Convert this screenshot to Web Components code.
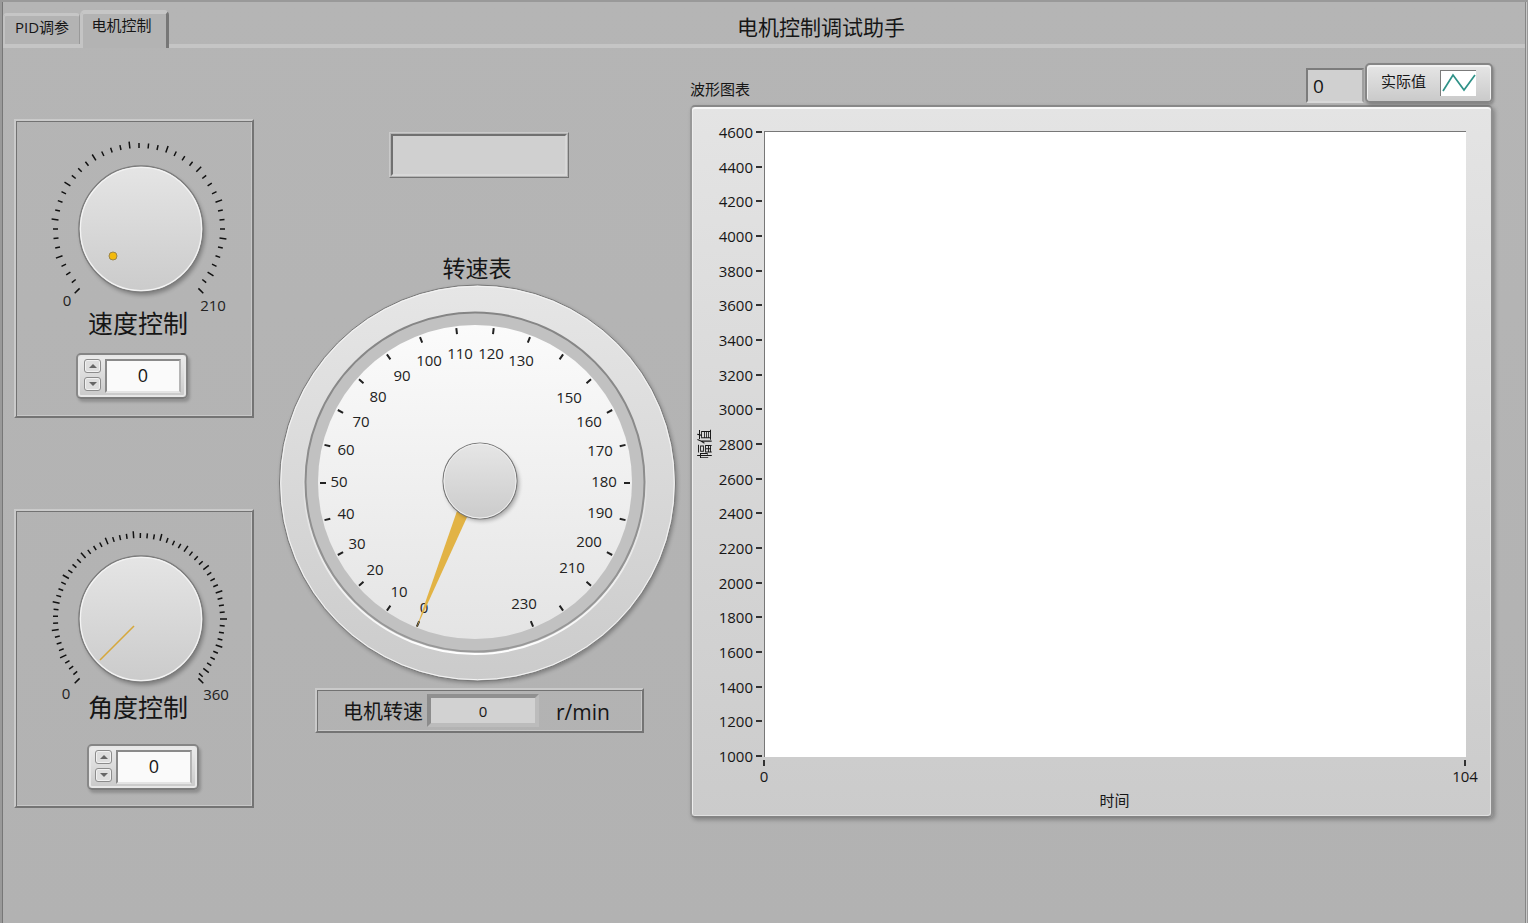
<!DOCTYPE html>
<html lang="zh-CN">
<head>
<meta charset="utf-8">
<title>电机控制调试助手</title>
<style>
  html, body { margin: 0; }
  body {
    background: #b3b3b3; color: #161616;
    font: 15px/20px "Open Sans", "Noto Sans CJK SC", sans-serif;
  }
</style>
</head>
<body>
<motor-app></motor-app>
<script>
const define = (name, css, html, setup) => {
  customElements.define(name, class extends HTMLElement {
    connectedCallback() {
      if (this.shadowRoot) return;
      const root = this.attachShadow({ mode: 'open' });
      root.innerHTML = `<style>*{box-sizing:border-box}button,input{font:inherit;color:inherit;margin:0}${css}</style>` +
        (typeof html === 'function' ? html(this) : html);
      if (setup) setup(this, root);
    }
  });
};
const polar = (cx, cy, r, deg) => {
  const a = deg * Math.PI / 180;
  return [(cx + r * Math.sin(a)).toFixed(1), (cy - r * Math.cos(a)).toFixed(1)];
};
const tick = (cx, cy, r1, r2, deg) =>
  `M${polar(cx, cy, r1, deg).join(' ')}L${polar(cx, cy, r2, deg).join(' ')}`;

/* Engraved frame shared by the decoration boxes */
const groove = `border:2px solid;border-color:#cacaca #747474 #747474 #cacaca;
  box-shadow:inset 1px 1px #727272,inset -1px -1px #c8c8c8;`;

define('tab-bar', `
  :host{display:flex;align-items:flex-end;height:46px;margin-right:3px;border-bottom:4px solid #c5c5c5}
  button{border:0;background:#b3b3b3;white-space:nowrap;flex:none}
  .idle{width:77px;height:31px;padding:0 0 6px;border-top:3px solid #c6c6c6;border-left:2px solid #c2c2c2;
    border-right:1px solid #999;border-radius:4px 4px 0 0}
  .on{width:89px;height:38px;margin-bottom:-4px;padding:0 6px 12px 0;border-top:4px solid #c6c6c6;
    border-left:3px solid #c4c4c4;border-right:3px solid #777;border-radius:5px 5px 0 0}
  ::slotted(h1){flex:1;margin:0 52px 0 0;font-size:21px;font-weight:400;line-height:34px;text-align:center}
`, `<button class="idle" type="button" role="tab">PID调参</button>
    <button class="on" type="button" role="tab" aria-selected="true">电机控制</button><slot></slot>`);

define('spin-box', `
  :host{display:flex;width:112px;height:46px;padding:4px 5px 5px 6px;gap:4px;border:2px solid;
    border-color:#858585 #808080 #7c7c7c #888;border-radius:5px;
    background:linear-gradient(#ececec,#c9c9c9);
    box-shadow:inset 0 0 0 2px #e7e7e7,2px 3px 3px #0003}
  .arrows{display:flex;flex-direction:column;justify-content:space-between;width:17px;padding-bottom:1px}
  button{display:grid;place-items:center;height:14px;padding:0;border:1px solid #8c8c8c;border-radius:3px;
    background:#dedede;box-shadow:inset 0 0 0 1px #f1f1f1}
  svg{display:block}
  input{flex:1;min-width:0;height:34px;padding:0 0 2px;text-align:center;font-size:18px;
    border:2px solid;border-color:#8a8a8a #b5b5b5 #e4e4e4 #8a8a8a;background:#fafafa;outline:0}
`, el => `<div class="arrows">
    <button type="button" aria-label="增加"><svg width="8" height="4"><path d="M0 4L4 0L8 4Z" fill="#666"/></svg></button>
    <button type="button" aria-label="减少"><svg width="8" height="4"><path d="M0 0L4 4L8 0Z" fill="#666"/></svg></button>
  </div><input value="0" inputmode="numeric" aria-label="${el.getAttribute('label')}">`,
(el, root) => {
  const input = root.querySelector('input');
  root.querySelectorAll('button').forEach((b, i) =>
    b.addEventListener('click', () => { input.value = Number(input.value) + (i ? -1 : 1); }));
});

define('knob-panel', `
  :host{display:block;height:299px;${groove}}
  svg{display:block;overflow:visible}
  text{font-size:15px;fill:#222;text-anchor:middle}
  h2{margin:-2px 0 0;padding-left:8px;font-size:25px;font-weight:400;line-height:28px;text-align:center}
  ::slotted(spin-box){margin-top:16px}
  :host([pointer=line]) svg{height:184px}
  :host([pointer=line]) ::slotted(spin-box){margin-top:23px}
`, el => {
  const max = +el.getAttribute('max'), step = +el.getAttribute('step');
  const values = [];
  for (let v = 0; v <= max; v += step) values.push(v);
  if (values[values.length - 1] < max) values.push(max);
  const d = values.map((v, i) => {
    const end = v === 0 || v === max;
    return tick(123, 108, end ? 84 : 81, end ? 91 : i % 4 ? 86 : 88, -135 + v / max * 270);
  }).join('');
  const line = el.getAttribute('pointer') === 'line';
  return `<svg width="236" height="190">
    <defs>
      <linearGradient id="face" x2="0" y2="1"><stop stop-color="#e5e5e5"/><stop offset="1" stop-color="#cbcbcb"/></linearGradient>
      <filter id="soft" x="-20%" y="-20%" width="140%" height="140%"><feGaussianBlur stdDeviation="2"/></filter>
    </defs>
    <path d="${d}" stroke="#111" stroke-width="1.5"/>
    <ellipse cx="127" cy="111" rx="62" ry="63" fill="#000" opacity=".3" filter="url(#soft)"/>
    <ellipse cx="125" cy="108" rx="62" ry="63" fill="url(#face)" stroke="#7d7d7d" stroke-width="1.5"/>
    <ellipse cx="125" cy="108" rx="60.6" ry="61.6" fill="none" stroke="#f3f3f3" stroke-width="1.3"/>
    ${line ? '<path d="M118 115L84 149" stroke="#d6a83c" stroke-width="1.6"/>'
           : '<circle cx="97" cy="135" r="4" fill="#f3ba0c" stroke="#9c8548"/>'}
    <text x="${line ? 50 : 51}" y="${line ? 188 : 185}">0</text><text x="${line ? 200 : 197}" y="${line ? 189 : 190}">${max}</text>
  </svg><h2>${el.getAttribute('label')}</h2><slot></slot>`;
});

define('speed-gauge', `
  :host{display:block}
  h2{margin:0;font-size:23px;font-weight:400;line-height:28px;padding-bottom:2px;text-align:center}
  svg{display:block;overflow:visible}
  text{font-size:15px;fill:#222;text-anchor:middle}
`, () => {
  const cx = 197, cy = 198, angle = v => (v - 115) * 180 / 130;
  let ticks = '', labels = '';
  for (let v = 0; v <= 230; v += 10) {
    const a = v === 0 ? -158 : v === 230 ? 158 : angle(v);
    ticks += tick(cx, v > 50 && v < 180 ? cy : cy + 1, 149, 155, a);
    if (v === 140 || v === 220) continue;
    const r = v === 0 ? 136 : v === 50 ? 136 : v < 70 ? 133 : v === 230 ? 132 : v === 150 ? 126 : 129;
    const [x, y] = polar(cx, cy, r, a);
    labels += `<text x="${Math.round(x)}" y="${Math.round(y) + 5}">${v}</text>`;
  }
  return `<h2>转速表</h2><svg width="398" height="398">
    <defs>
      <linearGradient id="rim" x2="0" y2="1"><stop stop-color="#e6e6e6"/><stop offset="1" stop-color="#cbcbcb"/></linearGradient>
      <linearGradient id="dial" x2="0" y2="1"><stop stop-color="#fbfbfb"/><stop offset="1" stop-color="#e4e4e4"/></linearGradient>
      <linearGradient id="edge" x2="0" y2="1"><stop stop-color="#858585"/><stop offset=".5" stop-color="#8d8d8d"/><stop offset="1" stop-color="#999"/></linearGradient>
      <linearGradient id="glow" x2="0" y2="1"><stop offset=".4" stop-color="#fff" stop-opacity="0"/><stop offset="1" stop-color="#fff"/></linearGradient>
      <filter id="soft" x="-20%" y="-20%" width="140%" height="140%"><feGaussianBlur stdDeviation="2"/></filter>
    </defs>
    <circle cx="201" cy="201" r="198" opacity=".3" filter="url(#soft)"/>
    <circle cx="199.500" cy="199" r="198" fill="url(#rim)" stroke="#787878"/>
    <circle cx="199.500" cy="199" r="196.700" fill="none" stroke="#f4f4f4"/>
    <circle cx="197" cy="199" r="171" fill="none" stroke="url(#glow)" stroke-width="2"/>
    <circle cx="197" cy="198" r="169.500" fill="#c1c1c1" stroke="url(#edge)" stroke-width="2"/>
    <circle cx="197" cy="198" r="157" fill="url(#dial)"/>
    <path d="${ticks}" stroke="#222" stroke-width="2"/>${labels}
    <path d="M179 227L190 231L138 345Z" fill="#e2b345"/>
    <circle cx="204" cy="200" r="37" opacity=".3" filter="url(#soft)"/>
    <ellipse cx="202" cy="197" rx="37" ry="38" fill="url(#rim)" stroke="#7a7a7a" stroke-width="1.200"/>
    <ellipse cx="202" cy="197" rx="36" ry="37" fill="none" stroke="#f0f0f0"/>
  </svg>`;
});

define('speed-readout', `
  :host{display:flex;align-items:center;width:329px;height:45px;padding-left:26px;${groove}}
  label{font-size:20px;line-height:28px;padding-top:2px}
  input{width:112px;height:33px;margin-left:4px;padding:0;text-align:center;border:4px solid;
    border-color:#909090 #bcbcbc #bcbcbc #8c8c8c;background:#d2d2d2;outline:0}
  span{margin-left:17px;font-size:21px;line-height:28px;padding-top:2px}
`, `<label for="rpm">电机转速</label><input id="rpm" value="0" readonly><span>r/min</span>`);

define('status-box', `
  :host{display:block;width:180px;height:46px;padding:1px;border:1px solid;border-color:#cacaca #747474 #747474 #cacaca}
  input{display:block;width:100%;height:100%;border:2px solid;border-color:#707070 #d8d8d8 #d8d8d8 #707070;
    background:#d0d0d0;outline:0}
`, `<input readonly aria-label="状态">`);

define('wave-chart', `
  :host{display:block}
  .bar{display:flex;align-items:flex-end;height:42px}
  h2{flex:1;margin:0 0 6px;font-size:15px;font-weight:400;line-height:20px}
  .bar input{width:58px;height:35px;margin:0 1px 2px 0;padding:0 0 0 5px;font-size:19px;border:2px solid;
    border-color:#7c7c7c #a0a0a0 #d8d8d8 #7c7c7c;background:#d0d0d0;outline:0}
  .legend{display:flex;align-items:center;gap:14px;width:128px;height:40px;
    padding:0 0 4px 14px;margin-bottom:2px;border:2px solid #868686;border-radius:5px;
    background:linear-gradient(#e6e6e6,#cacaca);box-shadow:inset 0 1px 0 1px #f2f2f2,1px 2px 3px #0004}
  .legend svg{flex:none;margin-top:4px;background:#fff;border:solid #7b7b7b;border-width:1px 0 0 1px}
  .panel{display:grid;grid-template-columns:24px 48px 1fr;grid-template-rows:626px 61px;height:713px;
    padding:24px 25px 0 0;border:2px solid;border-color:#888 #8e8e8e #848484 #999;border-radius:5px;
    background:linear-gradient(#e4e4e4,#cbcbcb);
    box-shadow:inset 0 2px #f8f8f8,inset 1px 0 #eee,inset -1px -1px #e0e0e0,2px 2px 4px #0004}
  .yname{align-self:center;justify-self:center;writing-mode:vertical-rl;text-orientation:sideways;
    transform:rotate(180deg);line-height:20px}
  .scale{display:flex;flex-direction:column;justify-content:space-between;margin:-9px 0 -9px}
  .scale span{display:flex;align-items:center;justify-content:flex-end;gap:3px;height:20px;padding-right:2px}
  .scale span::after{content:"";width:6px;height:2px;background:#333}
  .plot{background:#fff;border:solid #777;border-width:1px 0 0 1px}
  .time{grid-column:3;display:flex;justify-content:space-between;margin:3px -13px 0 -14px;height:20px}
  .time span{width:28px;line-height:20px;text-align:center}
  .time span::before{content:"";display:block;width:2px;height:6px;margin:0 auto;background:#333}
  .time .xname{width:60px;margin-top:30px}
  .time .xname::before{display:none}
`, () => {
  let scale = '';
  for (let v = 4600; v >= 1000; v -= 200) scale += `<span>${v}</span>`;
  return `<div class="bar"><h2>波形图表</h2><input value="0" readonly aria-label="实际值">
    <div class="legend">实际值<svg width="36" height="26"><path d="M2 20L12 4L23 19L34 4" fill="none" stroke="#2f9288" stroke-width="1.700"/></svg></div></div>
    <div class="panel"><div class="yname">幅值</div><div class="scale">${scale}</div><div class="plot"></div>
    <div class="time"><span>0</span><span class="xname">时间</span><span>104</span></div></div>`;
});

define('motor-app', `
  :host{display:block;min-height:100vh;padding:2px 0 0 3px;background:linear-gradient(#b5b5b5,#b2b2b2);
    box-shadow:inset 2px 2px #999,inset 3px 2px #777,inset -1px 0 #999,inset -2px 0 #c8c8c8,inset -3px 0 #858585}
  main{display:grid;grid-template-columns:240px 398px 1fr;gap:0 24px;padding:0 35px 0 11px;align-items:start}
  .knobs{display:grid;gap:91px;padding-top:71px}
  .meter{padding-top:84px}
  .meter status-box{margin:0 0 76px 111px}
  .meter speed-readout{margin:6px 0 0 37px}
  wave-chart{margin:15px 0 0 -10px}
`, `<tab-bar><h1>电机控制调试助手</h1></tab-bar>
  <main>
    <div class="knobs">
      <knob-panel label="速度控制" max="210" step="5"><spin-box label="速度控制" style="margin-left:60px"></spin-box></knob-panel>
      <knob-panel label="角度控制" max="360" step="6.25" pointer="line"><spin-box label="角度控制" style="margin-left:71px"></spin-box></knob-panel>
    </div>
    <div class="meter"><status-box></status-box><speed-gauge></speed-gauge><speed-readout></speed-readout></div>
    <wave-chart></wave-chart>
  </main>`);
</script>
</body>
</html>
